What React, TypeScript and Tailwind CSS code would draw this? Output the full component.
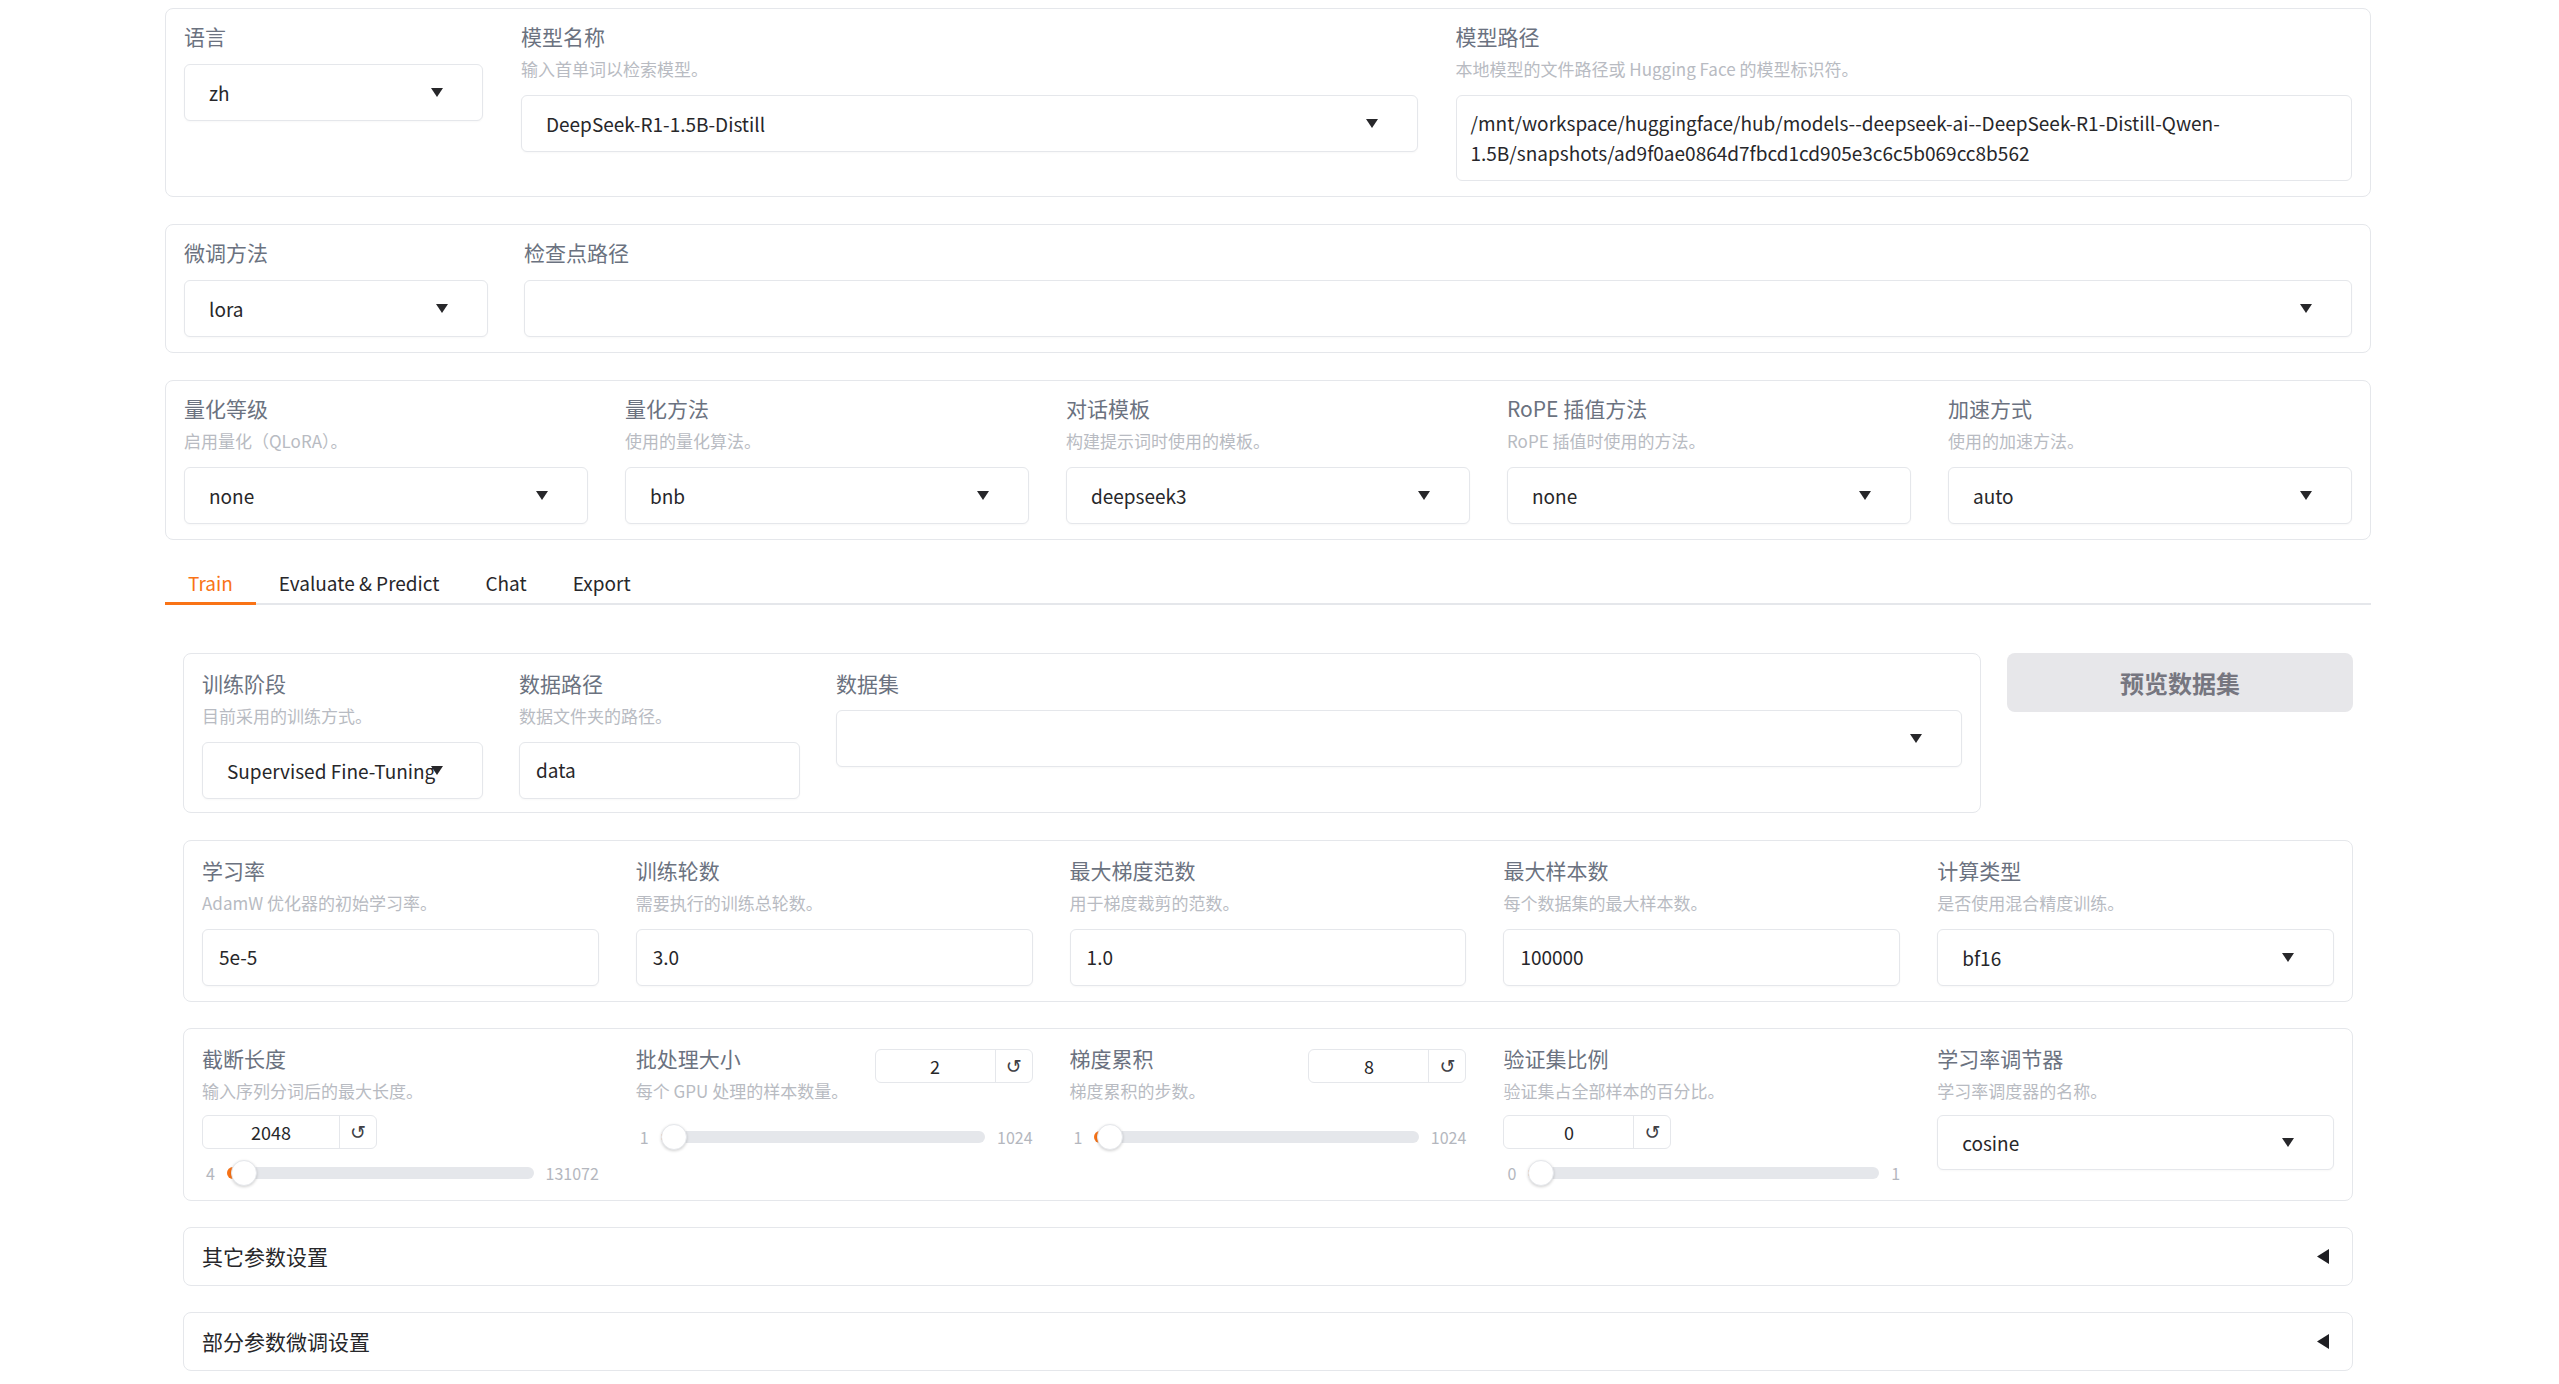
import type { ReactNode } from 'react'

// LLaMA-Factory style training board (Gradio look), Train tab open.

function Label({ children }: { children: ReactNode }) {
    return <div className="text-[21px] leading-[26px] text-[#6b7280]">{children}</div>
}

function Info({ children }: { children: ReactNode }) {
    return <div className="mt-[8px] text-[17px] leading-[24px] text-[#b8bbc2]">{children}</div>
}

function Caret() {
    return (
        <svg width="12" height="9" viewBox="0 0 12 9" className="shrink-0" aria-hidden>
            <path d="M0 0h12L6 9z" fill="#27272a" />
        </svg>
    )
}

function Dropdown({ value = '', className = '' }: { value?: string; className?: string }) {
    return (
        <div
            className={`flex h-[57px] items-center justify-between rounded-[6px] border border-[#e5e7eb] bg-white pl-[24px] pr-[39px] shadow-[0_1px_2px_rgba(0,0,0,0.03)] ${className}`}
        >
            <span className="min-w-0 whitespace-nowrap text-[19px] leading-[26px] text-[#27272a]">{value}</span>
            <Caret />
        </div>
    )
}

function Textbox({ value, className = '' }: { value: string; className?: string }) {
    return (
        <div
            className={`flex h-[57px] items-center rounded-[6px] border border-[#e5e7eb] bg-white px-[16px] text-[19px] text-[#27272a] shadow-[0_1px_2px_rgba(0,0,0,0.03)] ${className}`}
        >
            {value}
        </div>
    )
}

function Field({
    label,
    info,
    children,
    className = '',
}: {
    label: string
    info?: string
    children: ReactNode
    className?: string
}) {
    return (
        <div className={`min-w-0 ${className}`}>
            <Label>{label}</Label>
            {info && <Info>{info}</Info>}
            <div className={info ? 'mt-[14px]' : 'mt-[15px]'}>{children}</div>
        </div>
    )
}

function NumberBox({ value, className }: { value: string; className: string }) {
    return (
        <div className={`flex h-[34px] overflow-hidden rounded-[6px] border border-[#e5e7eb] bg-white ${className}`}>
            <div className="flex flex-1 items-center justify-center text-[18px] text-[#27272a]">{value}</div>
            <div className="flex w-[37px] items-center justify-center border-l border-[#e5e7eb] font-['DejaVu_Sans',sans-serif] text-[19px] text-[#3f3f46]">
                ↺
            </div>
        </div>
    )
}

function Track({ min, max, value }: { min: number; max: number; value: number }) {
    const p = (value - min) / (max - min)
    return (
        <div className="flex h-[28px] items-center gap-[12px] pl-[4px]">
            <span className="text-[16px] text-[#b4b7be]">{min}</span>
            <div className="relative h-[12px] flex-1 rounded-full bg-[#e5e7eb]">
                <div
                    className="absolute left-0 top-0 h-full rounded-full bg-[#f97316]"
                    style={{ width: `calc(${p} * (100% - 26px) + 13px)` }}
                />
                <div
                    className="absolute top-1/2 h-[26px] w-[26px] -translate-y-1/2 rounded-full border border-[#e5e7eb] bg-white shadow-[0_1px_3px_rgba(0,0,0,0.18)]"
                    style={{ left: `calc(${p} * (100% - 26px))` }}
                />
            </div>
            <span className="text-[16px] text-[#b4b7be]">{max}</span>
        </div>
    )
}

type SliderProps = {
    label: string
    info: string
    min: number
    max: number
    value: number
    inline?: boolean
    boxWidth: string
}

function Slider({ label, info, min, max, value, inline, boxWidth }: SliderProps) {
    if (inline) {
        return (
            <div className="min-w-0">
                <div className="flex items-start justify-between gap-[8px]">
                    <div>
                        <Label>{label}</Label>
                        <Info>{info}</Info>
                    </div>
                    <NumberBox value={String(value)} className={`mt-[4px] shrink-0 ${boxWidth}`} />
                </div>
                <div className="mt-[20px]">
                    <Track min={min} max={max} value={value} />
                </div>
            </div>
        )
    }
    return (
        <div className="min-w-0">
            <Label>{label}</Label>
            <Info>{info}</Info>
            <NumberBox value={String(value)} className={`mt-[12px] ${boxWidth}`} />
            <div className="mt-[10px]">
                <Track min={min} max={max} value={value} />
            </div>
        </div>
    )
}

function Accordion({ title }: { title: string }) {
    return (
        <div className="mt-[26px] flex h-[59px] items-center justify-between rounded-[8px] border border-[#e5e7eb] bg-white pl-[18px] pr-[23px]">
            <span className="text-[21px] text-[#27272a]">{title}</span>
            <svg width="12" height="15" viewBox="0 0 12 15" aria-hidden>
                <path d="M12 0v15L0 7.5z" fill="#1f1f23" />
            </svg>
        </div>
    )
}

const tabs = ['Train', 'Evaluate & Predict', 'Chat', 'Export']

export default function App() {
    return (
        <div className="min-h-screen bg-white font-['Noto_Sans_CJK_SC','Noto_Sans',sans-serif]">
            <div className="ml-[165px] w-[2206px] pb-[10px] pt-[8px]">
                {/* model row */}
                <div className="flex items-start gap-[38px] rounded-[8px] border border-[#e5e7eb] bg-white px-[18px] pb-[15px] pt-[14px]">
                    <Field label="语言" className="w-[299px] shrink-0">
                        <Dropdown value="zh" />
                    </Field>
                    <Field label="模型名称" info="输入首单词以检索模型。" className="flex-1">
                        <Dropdown value="DeepSeek-R1-1.5B-Distill" />
                    </Field>
                    <Field label="模型路径" info="本地模型的文件路径或 Hugging Face 的模型标识符。" className="flex-1">
                        <div className="rounded-[6px] border border-[#e5e7eb] bg-white px-[14px] py-[12px] text-[19px] leading-[30px] text-[#27272a]">
                            /mnt/workspace/huggingface/hub/models--deepseek-ai--DeepSeek-R1-Distill-Qwen-
                            <br />
                            1.5B/snapshots/ad9f0ae0864d7fbcd1cd905e3c6c5b069cc8b562
                        </div>
                    </Field>
                </div>

                {/* finetuning row */}
                <div className="mt-[27px] flex items-start gap-[36px] rounded-[8px] border border-[#e5e7eb] bg-white px-[18px] pb-[15px] pt-[14px]">
                    <Field label="微调方法" className="w-[304px] shrink-0">
                        <Dropdown value="lora" />
                    </Field>
                    <Field label="检查点路径" className="flex-1">
                        <Dropdown />
                    </Field>
                </div>

                {/* quantization row */}
                <div className="mt-[27px] grid grid-cols-5 gap-[37px] rounded-[8px] border border-[#e5e7eb] bg-white px-[18px] pb-[15px] pt-[14px]">
                    <Field label="量化等级" info="启用量化（QLoRA）。">
                        <Dropdown value="none" />
                    </Field>
                    <Field label="量化方法" info="使用的量化算法。">
                        <Dropdown value="bnb" />
                    </Field>
                    <Field label="对话模板" info="构建提示词时使用的模板。">
                        <Dropdown value="deepseek3" />
                    </Field>
                    <Field label="RoPE 插值方法" info="RoPE 插值时使用的方法。">
                        <Dropdown value="none" />
                    </Field>
                    <Field label="加速方式" info="使用的加速方法。">
                        <Dropdown value="auto" />
                    </Field>
                </div>

                {/* tabs */}
                <div className="mt-[20px] flex border-b-2 border-[#e5e7eb]">
                    {tabs.map((t, i) => (
                        <button
                            key={t}
                            type="button"
                            className={`-mb-[2px] border-b-[3px] px-[23px] pb-[6px] pt-[10px] text-[19px] leading-[26px] ${
                                i === 0 ? 'border-[#f97316] text-[#f97316]' : 'border-transparent text-[#27272a]'
                            }`}
                        >
                            {t}
                        </button>
                    ))}
                </div>

                <div className="mt-[48px] px-[18px]">
                    {/* dataset */}
                    <div className="flex items-start gap-[26px]">
                        <div className="flex flex-1 items-start gap-[36px] rounded-[8px] border border-[#e5e7eb] bg-white px-[18px] pb-[13px] pt-[16px]">
                            <Field label="训练阶段" info="目前采用的训练方式。" className="w-[281px] shrink-0">
                                <Dropdown value="Supervised Fine-Tuning" />
                            </Field>
                            <Field label="数据路径" info="数据文件夹的路径。" className="w-[281px] shrink-0">
                                <Textbox value="data" />
                            </Field>
                            <div className="min-w-0 flex-1">
                                <Label>数据集</Label>
                                <div className="mt-[14px]">
                                    <Dropdown />
                                </div>
                            </div>
                        </div>
                        <button
                            type="button"
                            className="h-[59px] w-[346px] shrink-0 rounded-[8px] bg-[#e7e7ea] text-[24px] font-bold text-[#767680]"
                        >
                            预览数据集
                        </button>
                    </div>

                    {/* optimizer */}
                    <div className="mt-[27px] grid grid-cols-5 gap-[37px] rounded-[8px] border border-[#e5e7eb] bg-white px-[18px] pb-[15px] pt-[16px]">
                        <Field label="学习率" info="AdamW 优化器的初始学习率。">
                            <Textbox value="5e-5" />
                        </Field>
                        <Field label="训练轮数" info="需要执行的训练总轮数。">
                            <Textbox value="3.0" />
                        </Field>
                        <Field label="最大梯度范数" info="用于梯度裁剪的范数。">
                            <Textbox value="1.0" />
                        </Field>
                        <Field label="最大样本数" info="每个数据集的最大样本数。">
                            <Textbox value="100000" />
                        </Field>
                        <Field label="计算类型" info="是否使用混合精度训练。">
                            <Dropdown value="bf16" />
                        </Field>
                    </div>

                    {/* sliders */}
                    <div className="mt-[26px] grid grid-cols-5 gap-[37px] rounded-[8px] border border-[#e5e7eb] bg-white px-[18px] pb-[13px] pt-[16px]">
                        <Slider
                            label="截断长度"
                            info="输入序列分词后的最大长度。"
                            min={4}
                            max={131072}
                            value={2048}
                            boxWidth="w-[175px]"
                        />
                        <Slider
                            label="批处理大小"
                            info="每个 GPU 处理的样本数量。"
                            min={1}
                            max={1024}
                            value={2}
                            inline
                            boxWidth="w-[158px]"
                        />
                        <Slider
                            label="梯度累积"
                            info="梯度累积的步数。"
                            min={1}
                            max={1024}
                            value={8}
                            inline
                            boxWidth="w-[158px]"
                        />
                        <Slider
                            label="验证集比例"
                            info="验证集占全部样本的百分比。"
                            min={0}
                            max={1}
                            value={0}
                            boxWidth="w-[168px]"
                        />
                        <div className="min-w-0">
                            <Label>学习率调节器</Label>
                            <Info>学习率调度器的名称。</Info>
                            <Dropdown value="cosine" className="mt-[12px] !h-[55px]" />
                        </div>
                    </div>

                    <Accordion title="其它参数设置" />
                    <Accordion title="部分参数微调设置" />
                </div>
            </div>
        </div>
    )
}
